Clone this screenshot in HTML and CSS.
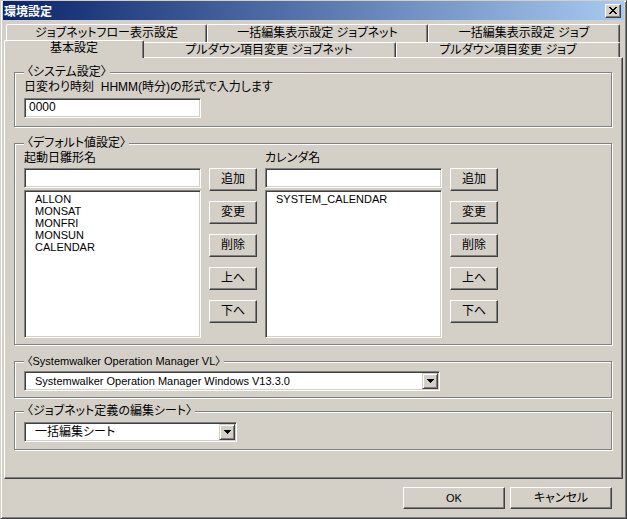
FILE: index.html
```html
<!DOCTYPE html>
<html lang="ja">
<head>
  <meta charset="UTF-8" />
  <title>環境設定</title>
  <link rel="stylesheet" href="styles.css">
</head>
<body>
<div class="window">
  <!-- タイトルバー -->
  <div class="titlebar">
    <span class="title">環境設定</span>
    <button class="close" type="button">
      <svg width="8" height="7" viewBox="0 0 8 7" shape-rendering="crispEdges">
        <path d="M0 0h2v1h-2zM6 0h2v1h-2zM1 1h2v1h-2zM5 1h2v1h-2zM2 2h4v1h-4zM3 3h2v1h-2zM2 4h4v1h-4zM1 5h2v1h-2zM5 5h2v1h-2zM0 6h2v1h-2zM6 6h2v1h-2z" fill="#000"/>
      </svg>
    </button>
  </div>

  <div class="client">
    <!-- タブ (2段) -->
    <div class="tabs">
      <div class="tab-row back">
        <div class="tab t-flow">ジョブネットフロー表示設定</div>
        <div class="tab t-bulk-net">一括編集表示設定 ジョブネット</div>
        <div class="tab t-bulk-job">一括編集表示設定 ジョブ</div>
      </div>
      <div class="tab-row front">
        <div class="tab active t-basic">基本設定</div>
        <div class="tab t-pull-net">プルダウン項目変更 ジョブネット</div>
        <div class="tab t-pull-job">プルダウン項目変更 ジョブ</div>
      </div>
    </div>

    <div class="panel">
      <!-- システム設定 -->
      <div class="group g-system">
        <div class="group-title">〈システム設定〉</div>
        <div class="label">日変わり時刻&nbsp;&nbsp;HHMM(時分)の形式で入力します</div>
        <div class="field">0000</div>
      </div>

      <!-- デフォルト値設定 -->
      <div class="group g-default">
        <div class="group-title">〈デフォルト値設定〉</div>
        <div class="columns">
          <div class="col">
            <div class="label">起動日雛形名</div>
            <div class="field"></div>
            <div class="list latin">
              <div>ALLON</div>
              <div>MONSAT</div>
              <div>MONFRI</div>
              <div>MONSUN</div>
              <div>CALENDAR</div>
            </div>
          </div>
          <div class="buttons">
            <button class="btn" type="button">追加</button>
            <button class="btn" type="button">変更</button>
            <button class="btn" type="button">削除</button>
            <button class="btn" type="button">上へ</button>
            <button class="btn" type="button">下へ</button>
          </div>
          <div class="col">
            <div class="label">カレンダ名</div>
            <div class="field"></div>
            <div class="list latin">
              <div>SYSTEM_CALENDAR</div>
            </div>
          </div>
          <div class="buttons">
            <button class="btn" type="button">追加</button>
            <button class="btn" type="button">変更</button>
            <button class="btn" type="button">削除</button>
            <button class="btn" type="button">上へ</button>
            <button class="btn" type="button">下へ</button>
          </div>
        </div>
      </div>

      <!-- Systemwalker -->
      <div class="group g-version">
        <div class="group-title latin">〈Systemwalker Operation Manager VL〉</div>
        <div class="combo wide">
          <span class="combo-value latin">Systemwalker Operation Manager Windows V13.3.0</span>
          <span class="combo-btn">
            <svg width="7" height="4" viewBox="0 0 7 4" shape-rendering="crispEdges"><path d="M0 0h7v1h-7zM1 1h5v1h-5zM2 2h3v1h-3zM3 3h1v1h-1z" fill="#000"/></svg>
          </span>
        </div>
      </div>

      <!-- 編集シート -->
      <div class="group g-sheet">
        <div class="group-title">〈ジョブネット定義の編集シート〉</div>
        <div class="combo narrow">
          <span class="combo-value">一括編集シート</span>
          <span class="combo-btn">
            <svg width="7" height="4" viewBox="0 0 7 4" shape-rendering="crispEdges"><path d="M0 0h7v1h-7zM1 1h5v1h-5zM2 2h3v1h-3zM3 3h1v1h-1z" fill="#000"/></svg>
          </span>
        </div>
      </div>
    </div>

    <div class="footer">
      <button class="btn dialog-btn latin" type="button">OK</button>
      <button class="btn dialog-btn" type="button">キャンセル</button>
    </div>
  </div>
</div>
</body>
</html>
```

FILE: styles.css
```css
/* 全体 */
body {
  margin: 0;
  font-family: "Liberation Sans", "Noto Sans CJK JP", sans-serif;
  font-size: 12px;
  font-feature-settings: "palt";
  color: #000;
  background: #D4D0C8;
}

button {
  font: inherit;
  color: inherit;
  padding: 0;
}

.latin {
  font-size: 11px;
}

/* ウィンドウ枠 */
.window {
  width: 627px;
  height: 519px;
  box-sizing: border-box;
  background: #D4D0C8;
  border: 1px solid;
  border-color: #D4D0C8 #404040 #404040 #D4D0C8;
  box-shadow: inset 1px 1px #fff, inset -1px -1px #808080;
  padding: 0 2px 2px 2px;
}

/* タイトルバー */
.titlebar {
  height: 19px;
  display: flex;
  align-items: center;
  justify-content: space-between;
  padding: 0 3px 0 1px;
  background: linear-gradient(to right, #0A246A, #A6CAF0);
}

.title {
  color: #fff;
  font-weight: bold;
  line-height: 14px;
  margin-top: 2px;
}

.close {
  width: 16px;
  height: 14px;
  box-sizing: border-box;
  display: flex;
  align-items: center;
  justify-content: center;
  background: #D4D0C8;
  border: 1px solid;
  border-color: #fff #404040 #404040 #fff;
  box-shadow: inset -1px -1px #808080;
}

.client {
  padding: 0 1px;
}

/* タブ */
.tabs {
  margin-top: 4px;
}

.tab-row {
  display: flex;
  padding-left: 2px;
  align-items: flex-end;
}

.tab-row.back {
  height: 18px;
}

.tab-row.front {
  height: 15px;
}

.tab {
  box-sizing: border-box;
  height: 100%;
  text-align: center;
  line-height: 14px;
  border: 1px solid;
  border-bottom: none;
  border-color: #fff #404040 #404040 #fff;
  box-shadow: inset -1px 0 #808080;
  border-radius: 2px 2px 0 0;
  background: #D4D0C8;
  white-space: nowrap;
}

.back .tab {
  padding-top: 1px;
}

.tab.active {
  position: relative;
  z-index: 1;
  height: 18px;
  margin: 0 -2px -1px;
}

.t-flow { width: 201px; }
.t-bulk-net { width: 221px; }
.t-bulk-job { width: 192px; }
.t-basic { width: 140px; }
.t-pull-net { width: 254px; }
.t-pull-job { width: 224px; }

/* タブの中身 */
.panel {
  box-sizing: border-box;
  height: 422px;
  border: 1px solid;
  border-color: #fff #404040 #404040 #fff;
  box-shadow: inset -1px -1px #808080;
  padding: 14px 10px 0 9px;
}

/* グループボックス */
.group {
  border: 1px solid #808080;
  box-shadow: inset 1px 1px #fff, 1px 1px #fff;
  padding: 0 9px 8px;
}

.group + .group {
  margin-top: 16px;
}

.group-title {
  display: table;
  margin: -8px 0 0 0;
  padding: 0 3px;
  line-height: 14px;
  background: #D4D0C8;
}

.label {
  margin-top: 1px;
  line-height: 14px;
}

/* 入力欄・リスト */
.field,
.list,
.combo {
  box-sizing: border-box;
  background: #fff;
  border: 1px solid;
  border-color: #808080 #fff #fff #808080;
  box-shadow: inset 1px 1px #404040, inset -1px -1px #D4D0C8;
}

.field {
  width: 177px;
  height: 20px;
  margin-top: 4px;
  padding: 0 4px;
  line-height: 17px;
}

.g-default .field {
  margin-top: 3px;
}

.list {
  width: 177px;
  height: 148px;
  margin-top: 2px;
  padding: 2px 10px;
  line-height: 12px;
}

.columns {
  display: flex;
  gap: 8px;
}

.buttons {
  display: flex;
  flex-direction: column;
  gap: 10px;
  padding-top: 18px;
}

.g-default {
  padding-bottom: 6px;
}

/* ボタン */
.btn {
  box-sizing: border-box;
  width: 48px;
  height: 23px;
  background: #D4D0C8;
  border: 1px solid;
  border-color: #fff #404040 #404040 #fff;
  box-shadow: inset -1px -1px #808080;
  line-height: 19px;
  text-align: center;
}

/* コンボボックス */
.combo {
  display: flex;
  align-items: center;
  height: 20px;
  margin-top: 3px;
  padding: 1px;
}

.combo.wide { width: 416px; }
.combo.narrow { width: 213px; }

.combo-value {
  flex: 1;
  padding-left: 9px;
  line-height: 16px;
}

.combo-btn {
  box-sizing: border-box;
  width: 16px;
  height: 16px;
  display: flex;
  align-items: center;
  justify-content: center;
  background: #D4D0C8;
  border: 1px solid;
  border-color: #D4D0C8 #404040 #404040 #D4D0C8;
  box-shadow: inset 1px 1px #fff, inset -1px -1px #808080;
}

.g-version {
  margin-top: 15px;
  padding-bottom: 6px;
}

.group.g-sheet {
  margin-top: 13px;
  padding-bottom: 7px;
}

.g-sheet .combo {
  margin-top: 4px;
}

/* 下部ボタン */
.footer {
  display: flex;
  justify-content: flex-end;
  gap: 5px;
  margin-top: 8px;
  padding-right: 11px;
}

.dialog-btn {
  width: 102px;
  height: 22px;
  line-height: 18px;
}
```
